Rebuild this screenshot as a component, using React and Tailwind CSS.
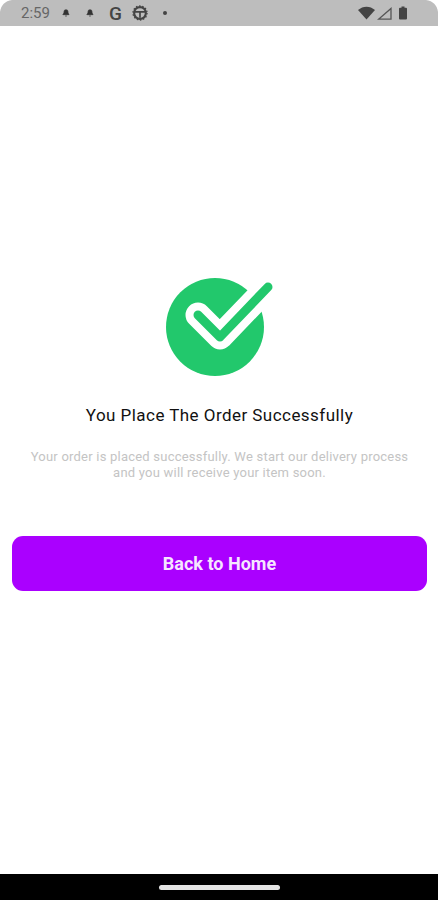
import { Bell } from 'lucide-react'

function StatusBar() {
    return (
        <div className="relative flex h-[26px] items-center justify-between bg-[#bdbdbd] pl-[21px] pr-[31px] text-[#4a4a4a]">
            {/* Rounded screen corners */}
            <svg className="absolute left-0 top-0" width="12" height="12" viewBox="0 0 12 12">
                <path d="M0 0H12C5 1 1 5 0 12Z" fill="#fff" />
            </svg>
            <svg className="absolute right-0 top-0" width="12" height="12" viewBox="0 0 12 12">
                <path d="M12 0H0C7 1 11 5 12 12Z" fill="#fff" />
            </svg>

            <div className="flex items-center">
                <span className="w-[30px] text-[15px] text-[#666]">2:59</span>
                <Bell size={8} fill="#333" stroke="#333" className="ml-[11px]" />
                <Bell size={8} fill="#333" stroke="#333" className="ml-[16px]" />
                <span className="ml-[15px] text-[19px] leading-none font-medium text-[#444]">G</span>
                <svg className="ml-[10px]" width="16" height="16" viewBox="0 0 15 15" fill="none" stroke="#444">
                    <circle cx="7.5" cy="7.5" r="5.5" strokeWidth="2" />
                    <circle cx="7.5" cy="7.5" r="6.6" strokeWidth="1.2" strokeDasharray="1.4 1.6" />
                    <path d="M2.5 6.5h10M7.5 7v5" strokeWidth="1.6" />
                </svg>
                <span className="ml-[15px] h-1 w-1 rounded-full bg-[#444]" />
            </div>

            <div className="flex items-center">
                <svg width="17" height="14" viewBox="0 0 17 13">
                    <path d="M0 3.5C5 -1 12 -1 17 3.5L8.5 13Z" fill="#444" />
                </svg>
                <svg className="ml-[2px]" width="15" height="13" viewBox="0 0 15 13" fill="none" stroke="#555" strokeWidth="1.3">
                    <path d="M1.5 12.2H14V1.5Z" />
                </svg>
                <svg className="ml-[7px]" width="8" height="14" viewBox="0 0 8 13">
                    <path d="M2.5 0h3v1.2H7a1 1 0 0 1 1 1V12a1 1 0 0 1-1 1H1a1 1 0 0 1-1-1V2.2a1 1 0 0 1 1-1h1.5Z" fill="#444" />
                </svg>
            </div>
        </div>
    )
}

function SuccessIcon() {
    return (
        <svg className="ml-[1px]" width="108" height="100" viewBox="0 0 108 100" fill="none">
            <circle cx="49" cy="50" r="49" fill="#22c86c" />
            <path d="M32 38 54 60 102 10" stroke="#fff" strokeWidth="25" strokeLinecap="round" strokeLinejoin="round" />
            <path d="M32 38 54 60 102 10" stroke="#22c86c" strokeWidth="9" strokeLinecap="round" strokeLinejoin="round" />
        </svg>
    )
}

export default function App() {
    return (
        <div className="flex h-[900px] w-[438px] flex-col bg-white font-[Roboto,sans-serif]">
            <StatusBar />

            <main className="flex flex-1 flex-col items-center pl-3 pr-[11px] pt-[251px]">
                <SuccessIcon />
                <h1 className="mt-[27px] text-[17px] leading-[22px] tracking-[0.45px] text-[#111]">
                    You Place The Order Successfully
                </h1>
                <p className="mt-[23px] w-[390px] text-center text-[13px] leading-[16px] tracking-[0.22px] text-[#c4c4c4]">
                    Your order is placed successfully. We start our delivery process and you will receive your item soon.
                </p>
                <button className="mt-[55px] h-[55px] w-full rounded-[11px] bg-[#aa00ff] text-[18px] font-bold text-[#f6e6ff]">
                    Back to Home
                </button>
            </main>

            <div className="flex h-[26px] items-center justify-center bg-black">
                <div className="h-[5px] w-[121px] rounded-full bg-[#e4e4e4]" />
            </div>
        </div>
    )
}
